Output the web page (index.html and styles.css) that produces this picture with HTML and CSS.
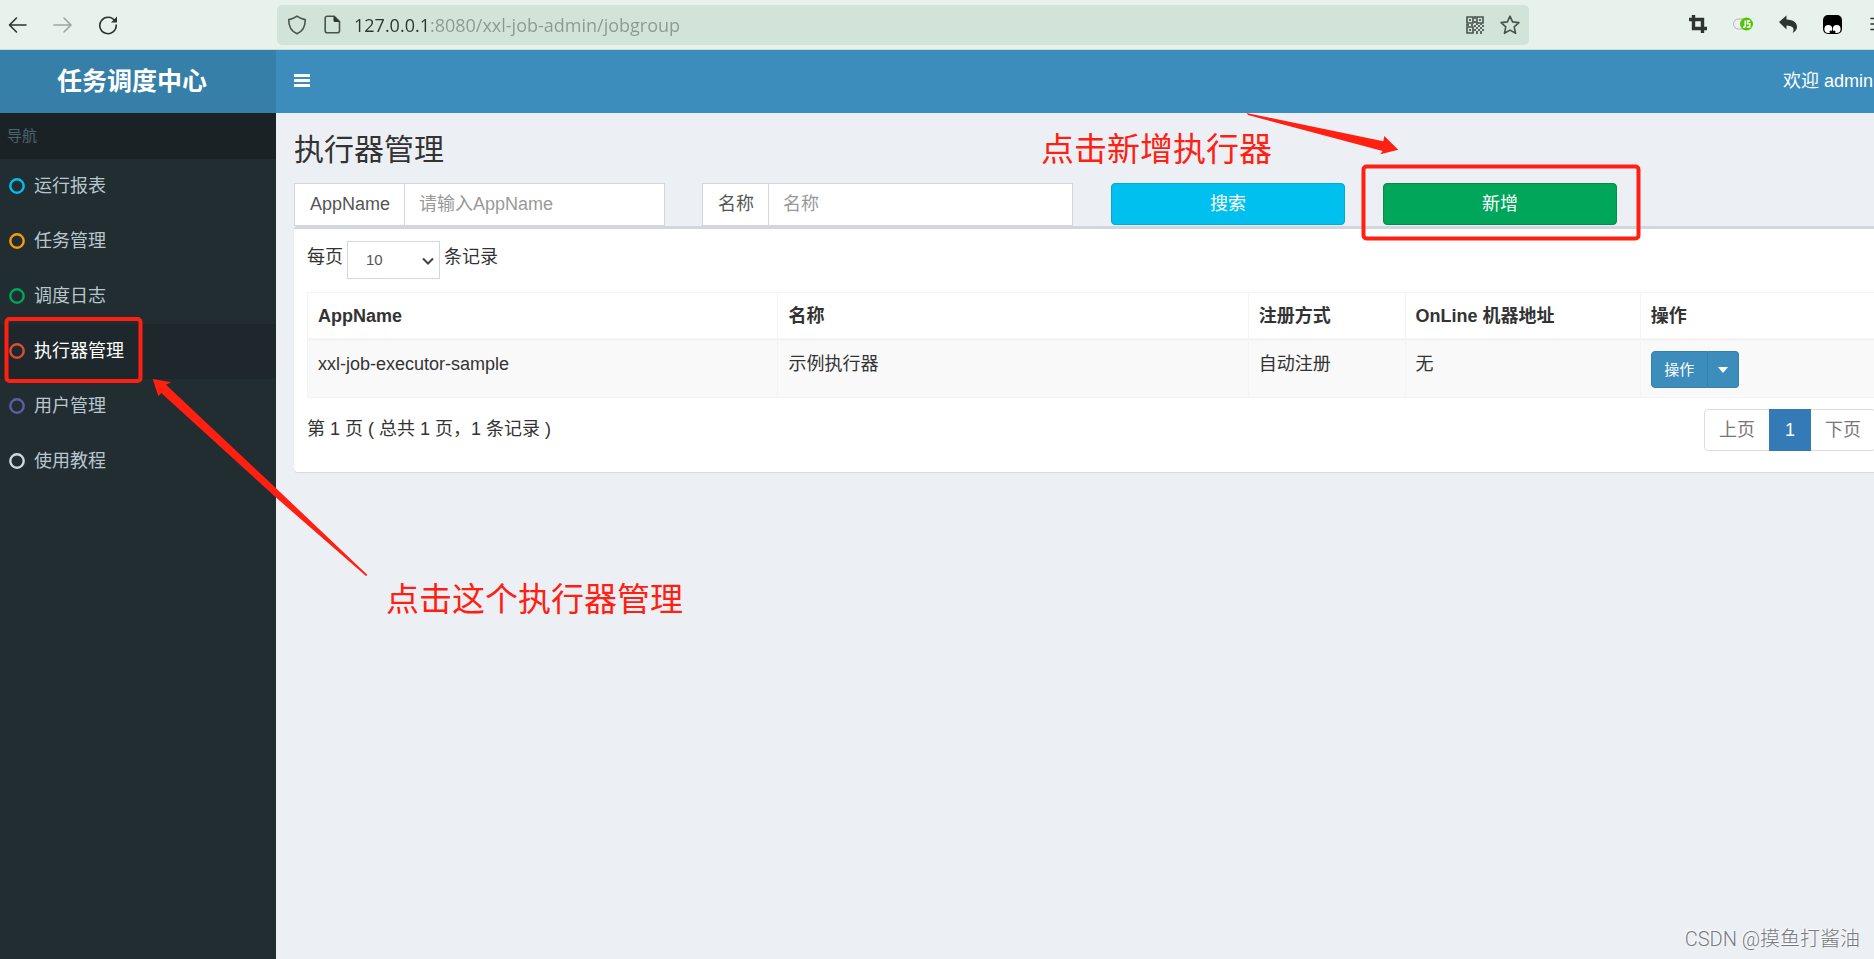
FILE: index.html
```html
<!DOCTYPE html>
<html lang="zh-CN">
<head>
<meta charset="utf-8">
<title>任务调度中心</title>
<link rel="stylesheet" href="styles.css">
</head>
<body>
<div class="browser">
  <div class="browser-nav">
    <button class="icon-btn" aria-label="后退"><svg viewBox="0 0 20 20"><path d="M18 10H1.500M8.500 3l-7 7 7 7" class="line"/></svg></button>
    <button class="icon-btn faded" aria-label="前进"><svg viewBox="0 0 20 20"><path d="M1 10h17M11 3l7 7-7 7" class="line"/></svg></button>
    <button class="icon-btn" aria-label="刷新"><svg viewBox="0 0 20 20"><path d="M17 6.200A8.200 8.200 0 1 0 18.200 10" class="line"/><path d="M19 1.500V7.500H13z" class="solid"/></svg></button>
  </div>
  <div class="address">
    <svg class="icon" viewBox="0 0 20 20"><path d="M10 1.200c2.500 2 5 2.800 8.200 3.400C18.500 11 16 16 10 18.800 4 16 1.500 11 1.800 4.600 5 4 7.500 3.200 10 1.200z" class="line soft"/></svg>
    <svg class="icon page-icon" viewBox="0 0 20 20"><path d="M11 1.200H4.200a2 2 0 0 0-2 2v12.600a2 2 0 0 0 2 2h10.300a2 2 0 0 0 2-2V6.500z" class="line soft"/><path d="M10.500 1l6.500 6h-5a1.500 1.500 0 0 1-1.500-1.500z" class="solid"/></svg>
    <input class="url" type="text" aria-label="地址" value="127.0.0.1:8080/xxl-job-admin/jobgroup">
    <button class="icon-btn" aria-label="二维码"><svg viewBox="0 0 20 20"><g class="qr"><path d="M2 2h6v6H2zM12 2h6v6h-6zM2 12h6v6H2z"/></g><path class="solid soft-fill" d="M4 4h2v2H4zM14 4h2v2h-2zM4 14h2v2H4zM9 1h2v3H9zM9 6h2v2H9zM1 9h3v2H1zM6 9h2v2H6zM9 10h2v2H9zM11 8h2v2h-2zM13 10h2v2h-2zM15 8h2v2h-2zM17 10h2v2h-2zM11 12h2v2h-2zM15 12h2v2h-2zM9 14h2v2H9zM13 14h2v2h-2zM17 14h2v2h-2zM11 16h2v3h-2zM15 16h2v3h-2z"/></svg></button>
    <button class="icon-btn" aria-label="收藏"><svg viewBox="0 0 20 20"><path d="M10 1.200l2.600 5.700 6.300.7-4.700 4.200 1.400 6.500L10 15.100l-5.600 3.200 1.400-6.500L1.100 7.600l6.300-.7z" class="line soft"/></svg></button>
  </div>
  <div class="browser-tools">
    <button class="icon-btn" aria-label="截图"><svg viewBox="0 0 20 20"><path d="M5.500 0v13.500H19M1 4.500h13.500V18" class="crop"/></svg></button>
    <button class="icon-btn" aria-label="JS"><svg viewBox="0 0 20 20"><rect x=".5" y="4" width="17" height="10" rx="5" fill="#eee" stroke="#b5b5b5"/><circle cx="13.500" cy="9" r="6.500" fill="#52c407"/><path d="M12.200 5.500v5.500q0 1.200-1.200 1.200h-1M17.200 6h-2.700v2.700h2.300v3.300h-3" fill="none" stroke="#fff" stroke-width="1.500"/></svg></button>
    <button class="icon-btn" aria-label="撤销"><svg viewBox="0 0 20 20"><path d="M1 7L8.500 .5v4c7 .2 10.500 3.200 10.500 7.500 0 2.800-1.500 4.200-4.500 6 2.600-4.300.5-7.300-6-7.500v4z" class="solid"/></svg></button>
    <button class="icon-btn" aria-label="脚本管理"><svg viewBox="0 0 20 20"><rect x="0" y="0" width="19" height="19" rx="5" fill="#000"/><circle cx="5.300" cy="14" r="3.900" fill="#fff"/><circle cx="13.700" cy="14" r="3.900" fill="#fff"/><circle cx="7.800" cy="16.800" r="1.200"/><circle cx="11.200" cy="16.800" r="1.200"/></svg></button>
    <button class="icon-btn" aria-label="菜单"><svg viewBox="0 0 20 20"><path d="M3 3.500h16M3 9h16M3 14.500h16" class="line"/></svg></button>
  </div>
</div>

<div class="app">
  <aside class="sidebar">
    <a class="logo" href="#">任务调度中心</a>
    <div class="nav-title">导航</div>
    <nav class="menu">
      <a class="menu-item" href="#"><svg class="ring aqua" viewBox="0 0 16 16"><circle cx="8" cy="8" r="6.700"/></svg>运行报表</a>
      <a class="menu-item" href="#"><svg class="ring yellow" viewBox="0 0 16 16"><circle cx="8" cy="8" r="6.700"/></svg>任务管理</a>
      <a class="menu-item" href="#"><svg class="ring green" viewBox="0 0 16 16"><circle cx="8" cy="8" r="6.700"/></svg>调度日志</a>
      <a class="menu-item active" href="#"><svg class="ring red" viewBox="0 0 16 16"><circle cx="8" cy="8" r="6.700"/></svg>执行器管理</a>
      <a class="menu-item" href="#"><svg class="ring purple" viewBox="0 0 16 16"><circle cx="8" cy="8" r="6.700"/></svg>用户管理</a>
      <a class="menu-item" href="#"><svg class="ring gray" viewBox="0 0 16 16"><circle cx="8" cy="8" r="6.700"/></svg>使用教程</a>
    </nav>
  </aside>
  <div class="main">
    <header class="topbar">
      <button class="toggle" aria-label="切换导航"><svg viewBox="0 0 16 14"><path d="M0 0h16v3H0zM0 5h16v3H0zM0 10h16v3H0z" fill="#fff"/></svg></button>
      <a class="welcome" href="#">欢迎 admin</a>
    </header>
    <main class="content">
      <h1 class="title">执行器管理</h1>
      <form class="filters">
        <div class="col wide"><div class="group"><label for="appname">AppName</label><input id="appname" type="text" placeholder="请输入AppName"></div></div>
        <div class="col wide"><div class="group"><label for="name">名称</label><input id="name" type="text" placeholder="名称"></div></div>
        <div class="col"><button type="button" class="btn info">搜索</button></div>
        <div class="col"><button type="button" class="btn success">新增</button></div>
      </form>
      <section class="box">
        <div class="length">
          <label for="len">每页</label>
          <div class="select"><select id="len"><option>10</option></select><svg viewBox="0 0 12 8"><path d="M1 1.500l5 5 5-5"/></svg></div>
          <span>条记录</span>
        </div>
        <table class="table">
          <colgroup><col class="c30"><col class="c30"><col class="c10"><col class="c15"><col class="c15"></colgroup>
          <thead><tr><th>AppName</th><th>名称</th><th>注册方式</th><th>OnLine 机器地址</th><th>操作</th></tr></thead>
          <tbody><tr><td>xxl-job-executor-sample</td><td>示例执行器</td><td>自动注册</td><td>无</td>
            <td><div class="actions"><button class="act">操作</button><button class="act caret" aria-label="展开"><svg viewBox="0 0 10 6"><path d="M0 0h10L5 6z" fill="#fff"/></svg></button></div></td></tr></tbody>
        </table>
        <div class="footer">
          <div class="info-text">第 1 页 ( 总共 1 页，1 条记录 )</div>
          <div class="pages"><a href="#">上页</a><a href="#" class="current">1</a><a href="#">下页</a></div>
        </div>
      </section>
    </main>
  </div>
</div>

<svg class="marks" width="1660" height="600" viewBox="0 0 1660 600" aria-hidden="true">
  <rect x="6.500" y="319" width="134" height="62" rx="3"/>
  <rect x="1363.500" y="166.500" width="275" height="72" rx="3"/>
  <path d="M1246.500 113L1248 115 1382.600 151 1380.300 154.300 1398.300 149.700 1384.300 136 1383.300 141.300z"/>
  <path d="M152.700 379L171.300 382.300 166 384.700 280 492 367.500 575 366 576 276 497.500 161.300 393 158.300 396.300z"/>
</svg>
<div class="note note-add">点击新增执行器</div>
<div class="note note-menu">点击这个执行器管理</div>
<div class="watermark">CSDN @摸鱼打酱油</div>
</body>
</html>
```
FILE: styles.css
```css
* { box-sizing: border-box; }
body {
  margin: 0;
  min-height: 100vh;
  display: flex;
  flex-direction: column;
  position: relative;
  overflow: hidden;
  background: #ecf0f5;
  color: #333;
  font: 18px/26px "Liberation Sans", "Noto Sans CJK SC", sans-serif;
}
a { text-decoration: none; color: inherit; }
button, input, select { font: inherit; color: inherit; margin: 0; }
button { border: 0; padding: 0; background: none; }

/* browser bar */
.browser {
  display: flex;
  align-items: center;
  height: 50px;
  background: #e8f2ec;
  border-bottom: 1px solid #cfdcd5;
}
.browser-nav, .browser-tools { display: flex; gap: 25px; flex: none; }
.browser-nav { width: 277px; padding-left: 8px; }
.browser-tools { width: 345px; padding-left: 159px; overflow: hidden; }
.icon-btn, .icon { width: 20px; height: 20px; flex: none; }
.icon-btn svg { display: block; width: 20px; height: 20px; }
.faded { opacity: .4; }
.line { fill: none; stroke: #2d3431; stroke-width: 1.6; stroke-linejoin: round; stroke-linecap: round; }
.soft { stroke: #48534d; }
.solid { fill: #2d3431; }
.soft-fill { fill: #5c6962; }
.crop { fill: none; stroke: #2d3431; stroke-width: 3.4; }
.qr path { fill: none; stroke: #48534d; stroke-width: 1.6; }
.address {
  flex: 1;
  display: flex;
  align-items: center;
  height: 40px;
  padding: 0 9px 0 10px;
  background: #d2e4da;
  border-radius: 5px;
}
.page-icon { margin: 0 11px 0 16px; }
.url {
  flex: 1;
  min-width: 0;
  padding: 0;
  border: 0;
  outline: 0;
  font: 18px/26px "Open Sans", sans-serif;
  color: transparent;
  background: linear-gradient(90deg, #2c3531 76px, #8b9991 76px);
  -webkit-background-clip: text;
  background-clip: text;
}
.address .icon-btn + .icon-btn { margin-left: 15px; }

/* sidebar */
.app { flex: 1; display: flex; }
.sidebar { width: 276px; flex: none; background: #222d32; color: #b8c7ce; }
.logo {
  display: block;
  line-height: 63px;
  text-align: center;
  font-size: 25px;
  font-weight: bold;
  padding-right: 12px;
  color: #fff;
  background: #367fa9;
}
.nav-title { padding-left: 7px; line-height: 46px; font-size: 15px; color: #4b646f; background: #1a2226; }
.menu-item { display: flex; align-items: center; gap: 9px; height: 55px; padding: 0 0 2px 9px; }
.menu-item.active { background: #1e282c; color: #fff; }
.ring { width: 16px; height: 16px; fill: none; stroke: currentColor; stroke-width: 2.4; }
.aqua { color: #00c0ef; }
.yellow { color: #f39c12; }
.green { color: #00a65a; }
.red { color: #dd4b39; }
.purple { color: #605ca8; }
.gray { color: #d2d6de; }

/* main column, wider than the viewport */
.main { flex: 1; min-width: 0; }
.topbar { display: flex; align-items: center; justify-content: space-between; height: 63px; padding: 0 1px 2px 18px; background: #3c8dbc; color: #fff; }
.toggle svg { display: block; width: 16px; height: 14px; }
.content { margin-right: -34px; }
.title { margin: 0; padding: 20px 18px 16px; font-size: 30px; line-height: 34px; font-weight: normal; }
.filters { display: flex; height: 43px; }
.col { width: calc(100% / 6); padding: 0 19px; }
.col.wide { width: 25%; padding: 0 19px 0 18px; }
.group { display: flex; height: 43px; border: 1px solid #d2d6de; background: #fff; }
.group label { padding: 0 14px 0 15px; line-height: 40px; color: #555; border-right: 1px solid #d2d6de; }
.group input { flex: 1; min-width: 0; padding: 0 14px 2px; border: 0; background: none; outline: 0; }
.group input::placeholder { color: #999; opacity: 1; }
.btn { display: block; width: 100%; height: 42px; border: 1px solid; border-radius: 4px; color: #fff; }
.info { background: #00c0ef; border-color: #00acd6; }
.success { background: #00a65a; border-color: #008d4c; }
.box {
  margin: 0 19px 0 18px;
  padding: 12px 14px 21px 13px;
  background: #fff;
  border-top: 3px solid #d2d6de;
  border-radius: 4px;
  box-shadow: 0 1px 1px rgba(0, 0, 0, .1);
}
.length { display: flex; gap: 4px; line-height: 32px; margin-bottom: 13px; }
.select { position: relative; }
.select select {
  display: block;
  width: 93px;
  height: 38px;
  padding: 0 18px;
  border: 1px solid #d2d6de;
  border-radius: 0;
  appearance: none;
  background: #fff;
  font-size: 15px;
  color: #555;
}
.select svg { position: absolute; right: 6px; top: 16px; width: 12px; height: 8px; fill: none; stroke: #444; stroke-width: 2; }
.table { width: 100%; table-layout: fixed; border-spacing: 0; border-top: 1px solid #f4f4f4; }
.c30 { width: 30%; }
.c10 { width: 10%; }
.c15 { width: 15%; }
.table th, .table td { padding: 10px; text-align: left; vertical-align: top; border-left: 1px solid #f4f4f4; line-height: 26px; }
.table th { padding-bottom: 9px; border-bottom: 3px solid #f4f4f4; }
.table td { padding-bottom: 9px; background: #f9f9f9; border-bottom: 1px solid #f4f4f4; }
.actions { display: flex; }
.act { width: 57px; height: 37px; font-size: 15px; color: #fff; background: #3c8dbc; border: 1px solid #367fa9; border-radius: 4px 0 0 4px; }
.caret { display: flex; align-items: center; justify-content: center; width: 31px; border-left: 0; border-radius: 0 4px 4px 0; }
.caret svg { width: 10px; height: 6px; }
.footer { display: flex; justify-content: space-between; margin-top: 11px; margin-right: -1px; line-height: 40px; }
.pages { display: flex; height: 42px; border: 1px solid #ddd; border-radius: 4px; background: #fff; color: #777; }
.pages a { padding: 0 14px; }
.pages .current { margin: -1px 0; padding: 0 16px; line-height: 42px; background: #337ab7; color: #fff; }

/* annotations over the page */
.marks { position: absolute; left: 0; top: 0; pointer-events: none; }
.marks rect { fill: none; stroke: #ff2012; stroke-width: 4; }
.marks path { fill: #ff2012; }
.note { position: absolute; font-size: 33px; line-height: 40px; color: #ff2012; white-space: nowrap; }
.note-add { left: 1041px; top: 130px; }
.note-menu { left: 386px; top: 580px; }
.watermark { position: absolute; right: 14px; bottom: 7px; font-family: Roboto, "Noto Sans CJK SC", sans-serif; font-weight: 300; font-size: 20px; color: #77797d; text-shadow: -1px -1px 0 #fff; }
```
